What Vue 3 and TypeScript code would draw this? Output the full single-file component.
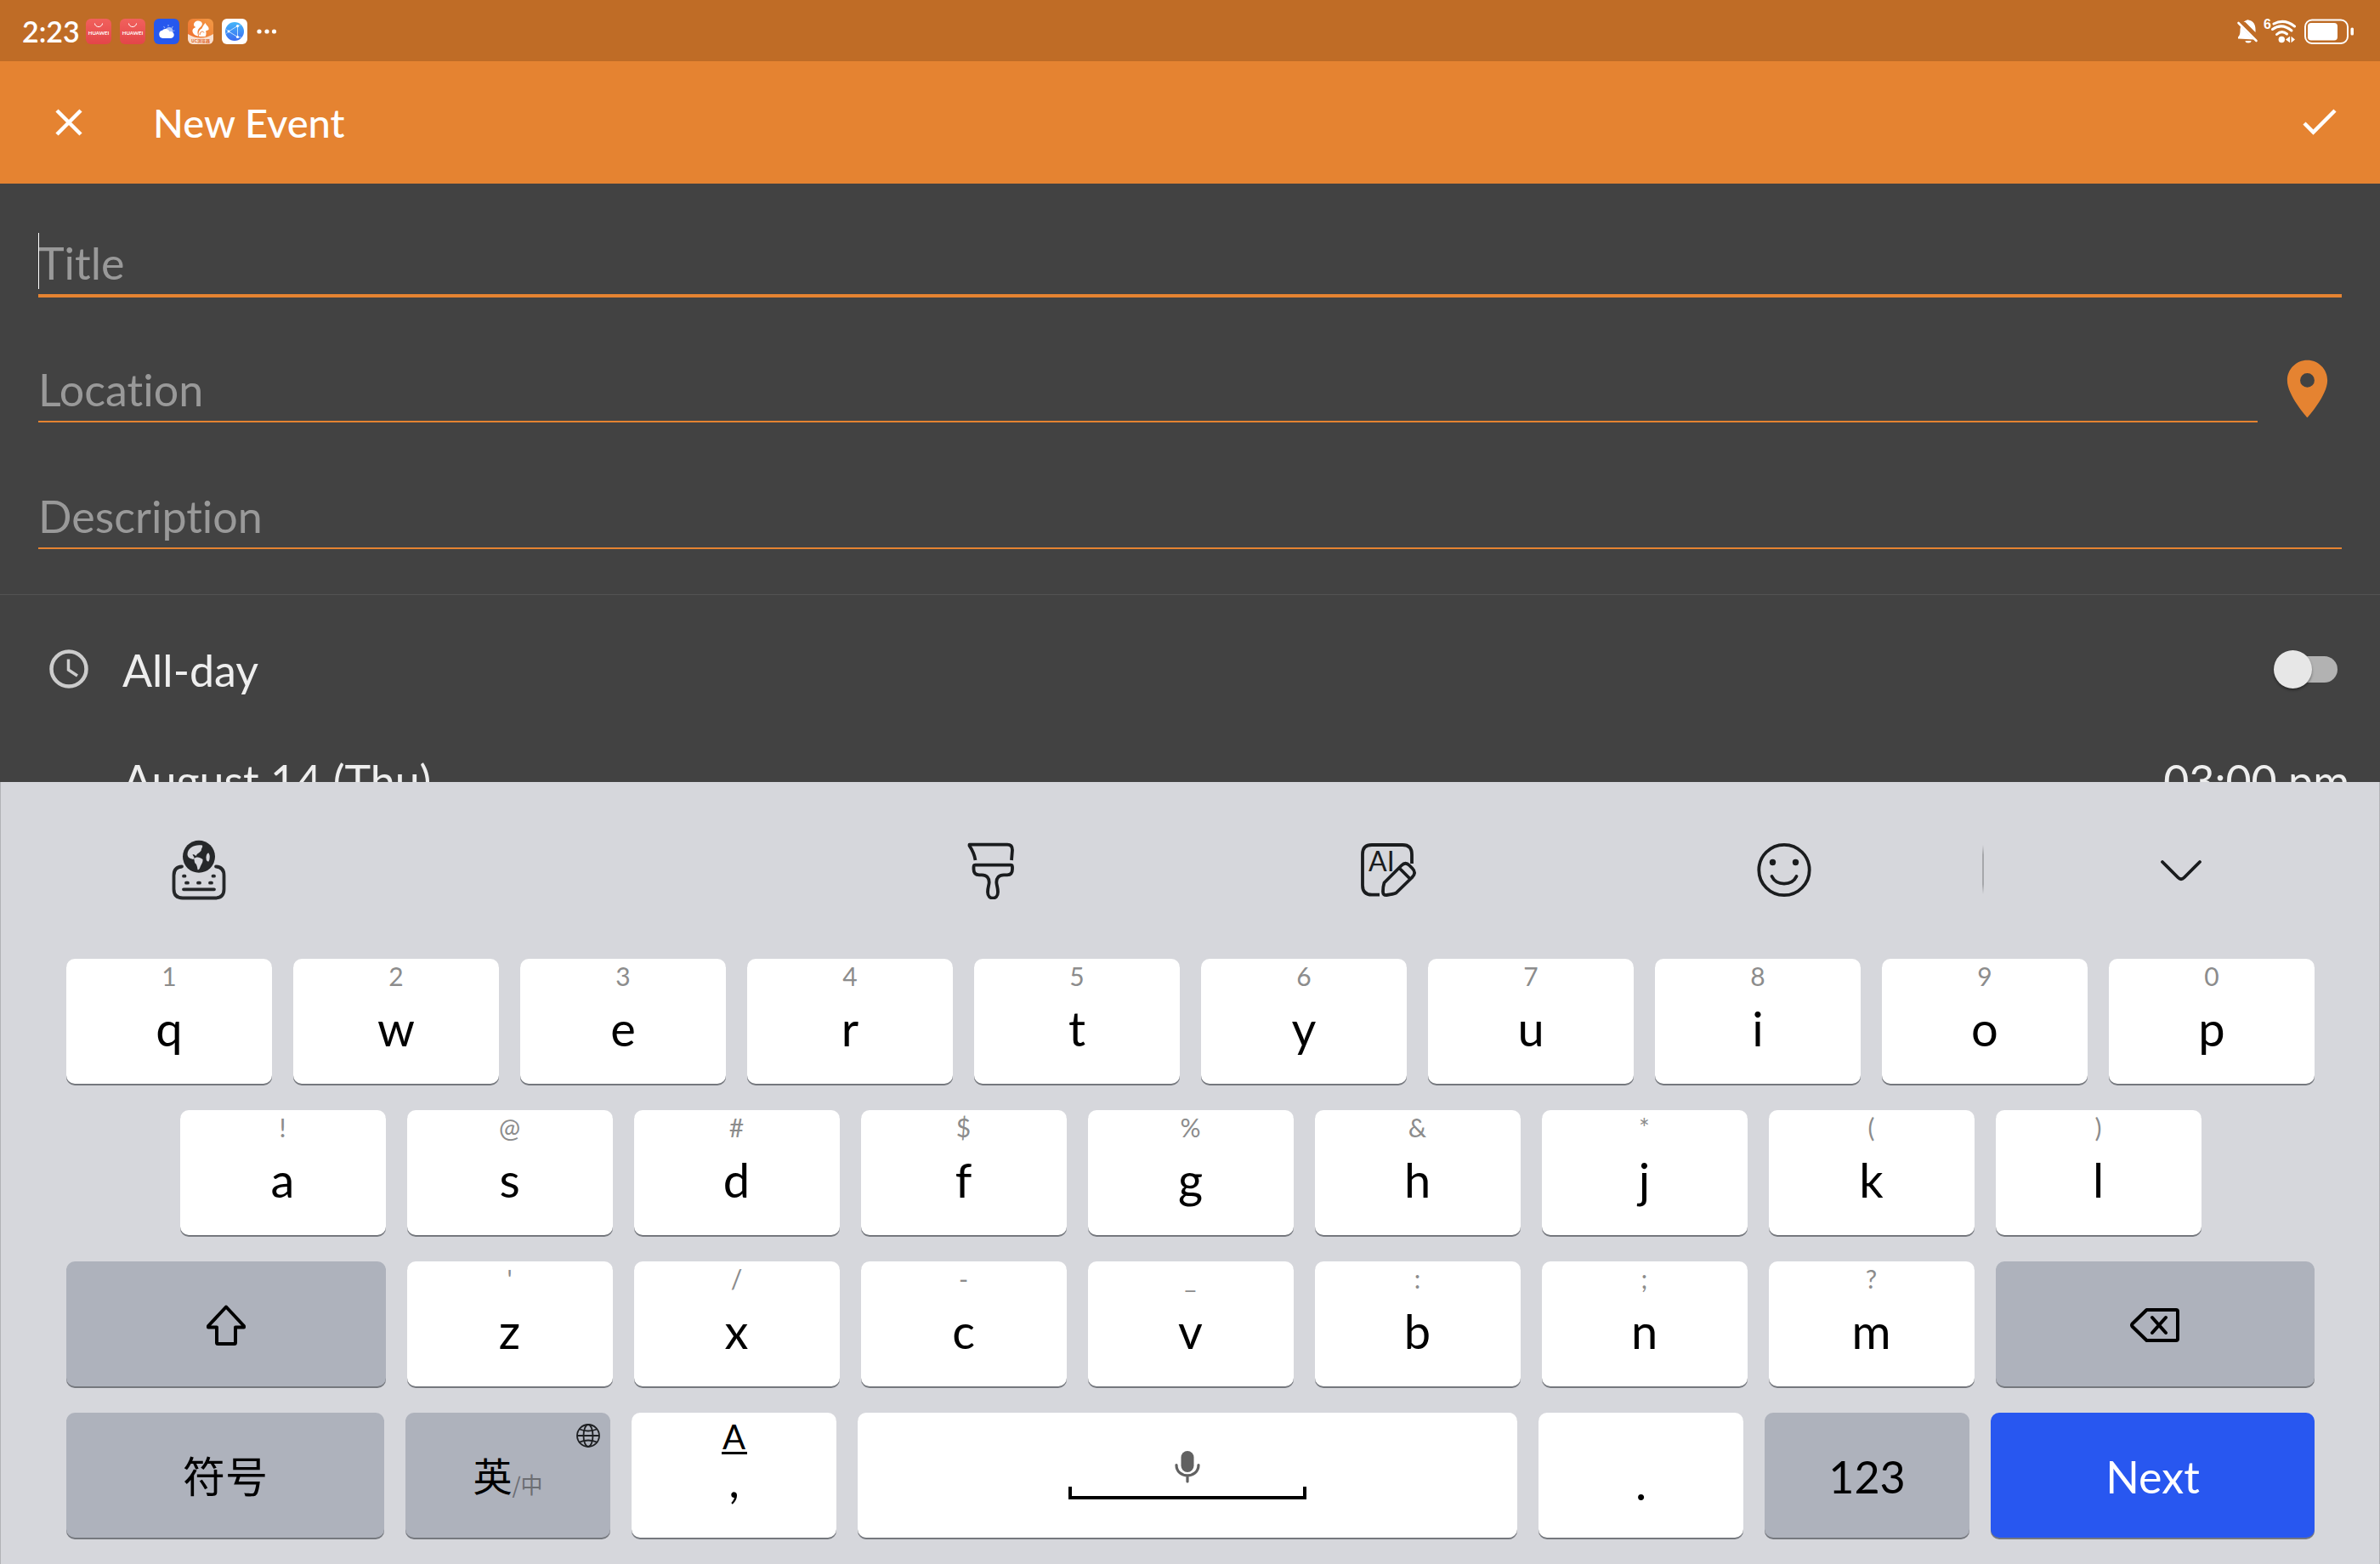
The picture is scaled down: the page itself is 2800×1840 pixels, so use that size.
<script setup lang="ts">
import { ref } from 'vue'

interface Key {
  hint: string
  label: string
}

const toKeys = (letters: string, hints: string): Key[] =>
  [...letters].map((label, i) => ({ label, hint: hints[i] }))

const topRow = toKeys('qwertyuiop', '1234567890')
const homeRow = toKeys('asdfghjkl', '!@#$%&*()')
const bottomRow = toKeys('zxcvbnm', "'/-_:;?")

const title = ref('')
const location = ref('')
const description = ref('')
const allDay = ref(false)
</script>

<template>
  <div class="screen">
    <header class="status">
      <div class="status-left">
        <span class="time">2:23</span>
        <div class="apps">
          <svg v-for="n in 2" :key="n" class="app" viewBox="0 0 30 30">
            <defs>
              <linearGradient :id="'mall' + n" x1="0" y1="0" x2="0" y2="1">
                <stop offset="0" stop-color="#f1615c" />
                <stop offset="1" stop-color="#e34549" />
              </linearGradient>
            </defs>
            <rect width="30" height="30" rx="6" :fill="`url(#mall${n})`" />
            <path d="M10.500 5.500a4.500 4 0 0 0 9 0" fill="none" stroke="#fff" stroke-width="1" />
            <text x="15" y="19" text-anchor="middle" class="brand">HUAWEI</text>
          </svg>
          <svg class="app" viewBox="0 0 30 30">
            <rect width="30" height="30" rx="6" fill="#2658ee" />
            <g stroke="#8fabf7" stroke-width="1.200">
              <path d="M17 7v2M11.500 9l1.500 2M22.500 9L21 11M24.500 14l-2 .5" />
            </g>
            <circle cx="18" cy="14.500" r="4.500" fill="#a9bff9" />
            <path d="M10.500 23a4.700 4.700 0 0 1-.4-9.300A5 5 0 0 1 18.500 15.200a4 4 0 1 1 1.500 7.800z" fill="#fff" />
          </svg>
          <svg class="app" viewBox="0 0 30 30">
            <defs>
              <linearGradient id="squirrel" x1="1" y1="0" x2="0" y2="1">
                <stop offset="0" stop-color="#f39a45" />
                <stop offset="1" stop-color="#ee6a2b" />
              </linearGradient>
              <clipPath id="squirrel-clip"><rect width="30" height="30" rx="6" /></clipPath>
            </defs>
            <g clip-path="url(#squirrel-clip)">
              <rect width="30" height="30" fill="url(#squirrel)" />
              <path d="M0 18Q15 27 30 18V30H0z" fill="#f9e0cf" />
              <path
                d="M7 7C7 3 12 1 15.500 3.500C18.500 6 16 9 13.500 11C11 13.500 11 17 12.500 20.500C8 20 5 17 5.500 13.500C5.700 11.500 8 10.500 9.500 10C8 9.500 7 8.500 7 7Z"
                fill="#fff"
              />
              <path
                d="M20.500 5L22 7.500C24 9 25 11 24.500 13L21 14.500C22 17 21.500 19.500 20.500 21H13.500C11.500 18 13 13 16.500 11.500C17.500 9 19 7 20.500 5Z"
                fill="#fff"
              />
              <path d="M14 19c0-4 4-5 5-2.500" fill="none" stroke="#ef7a34" stroke-width="1" />
              <text x="15" y="28" text-anchor="middle" class="brand-cjk">UC浏览器</text>
            </g>
          </svg>
          <svg class="app" viewBox="0 0 30 30">
            <defs>
              <linearGradient id="browser" x1="0" y1="0" x2="0" y2="1">
                <stop offset="0" stop-color="#43b5f8" />
                <stop offset="1" stop-color="#3c6cf2" />
              </linearGradient>
            </defs>
            <rect width="30" height="30" rx="6" fill="#fff" />
            <circle cx="15" cy="15" r="11" fill="url(#browser)" />
            <path d="M8 15L18.500 8.500V21.500Z" fill="none" stroke="#bfe0ff" stroke-width="1" />
            <path d="M4.500 12L8 15L4.500 18M18.500 8.500L22 7.500M18.500 21.500L23 22" fill="none" stroke="#bfe0ff" stroke-width=".7" />
            <g fill="#fff">
              <circle cx="8" cy="15" r="1.400" />
              <circle cx="18.500" cy="8.500" r="1.600" />
              <circle cx="18.500" cy="21.500" r="1.600" />
            </g>
          </svg>
          <svg class="more" viewBox="0 0 26 30">
            <g fill="#fff">
              <circle cx="4" cy="15" r="2.600" />
              <circle cx="13" cy="15" r="2.600" />
              <circle cx="21.500" cy="15" r="2.600" />
            </g>
          </svg>
        </div>
      </div>
      <svg class="indicators" viewBox="0 0 140 32">
        <g fill="#fff">
          <path d="M3 24V22.500C5.500 20.500 5.500 17 5.500 13.500L6 10L21.500 25.500L3 24.500Z" />
          <path d="M9.500 5C11 3.700 12 3.400 13 2.800Q14.500 1.500 16 2.800C21.500 4 24 8.500 23.500 17L11.500 5Z" />
          <path d="M11.500 27h7a3.500 2.500 0 0 1-7 0z" />
        </g>
        <path d="M3.500 6L24.500 27" stroke="#fff" stroke-width="2.600" stroke-linecap="round" />
        <text x="33" y="13" class="wifi-gen">6</text>
        <g fill="none" stroke="#fff" stroke-width="3" stroke-linecap="round">
          <path d="M45 7Q57.500 .5 69.500 10" />
          <path d="M43.500 13.500Q54.500 5.500 66 15" />
          <path d="M48.500 19.500Q54.500 14 60.500 19" />
        </g>
        <circle cx="54.300" cy="25.500" r="3.700" fill="#fff" />
        <path d="M59 25.500l5-3.800v7.600zM70 25.500l-4.500-3.800v7.600z" fill="#fff" />
        <rect x="82" y="2.500" width="50" height="27.500" rx="8" fill="none" stroke="#fff" stroke-width="2" />
        <rect x="85" y="6" width="35" height="20.500" rx="4" fill="#fff" />
        <rect x="135.500" y="11.500" width="3.500" height="9" rx="1.500" fill="#fff" />
      </svg>
    </header>

    <div class="appbar">
      <button type="button" class="bar-btn" aria-label="Close">
        <svg width="34" height="34" viewBox="0 0 34 34">
          <path d="M3 3L31 31M31 3L3 31" stroke="#fff" stroke-width="4.500" />
        </svg>
      </button>
      <h1>New Event</h1>
      <button type="button" class="bar-btn" aria-label="Save">
        <svg width="42" height="34" viewBox="0 0 42 34">
          <path d="M3 18L13.500 28.500L39 3" fill="none" stroke="#fff" stroke-width="4.500" />
        </svg>
      </button>
    </div>

    <main class="form">
      <section class="fields">
        <div class="field focused">
          <input v-model="title" type="text" placeholder="Title" aria-label="Title" />
        </div>
        <div class="field">
          <input v-model="location" type="text" placeholder="Location" aria-label="Location" />
          <button type="button" class="pin" aria-label="Pick on map">
            <svg width="81" height="81" viewBox="0 0 24 24">
              <path
                d="M12 2C8.130 2 5 5.130 5 9c0 5.250 7 13 7 13s7-7.750 7-13c0-3.870-3.130-7-7-7zm0 9.500a2.500 2.500 0 1 1 0-5 2.500 2.500 0 0 1 0 5z"
                fill="#e58331"
              />
            </svg>
          </button>
        </div>
        <div class="field">
          <input v-model="description" type="text" placeholder="Description" aria-label="Description" />
        </div>
      </section>

      <label class="allday">
        <svg width="46" height="46" viewBox="0 0 46 46" fill="none" stroke="#ccc">
          <circle cx="23" cy="23" r="20.500" stroke-width="4.500" />
          <path d="M22.500 11.500V24L33 31" stroke-width="3.500" />
        </svg>
        <span>All-day</span>
        <input v-model="allDay" type="checkbox" role="switch" />
      </label>
      <div class="when">
        <button type="button">August 14 (Thu)</button>
        <button type="button">03:00 pm</button>
      </div>
    </main>

    <section class="keyboard" aria-label="Keyboard">
      <div class="tools">
        <button type="button" aria-label="Switch keyboard">
          <svg width="66" height="72" viewBox="0 0 66 72" fill="none" stroke="#26282a" stroke-width="3.800" stroke-linecap="round">
            <path d="M13 31.500Q3.500 32 3.500 42V58Q3.500 68.500 14 68.500H52Q62.500 68.500 62.500 58V42Q62.500 32 53 31.500" />
            <path d="M15 42.700h1.500M49.500 42.700H51M18 50.700h2M32 50.700h2M46 50.700h2M15 58.300H51" />
            <circle cx="33" cy="19.700" r="19" fill="#26282a" stroke="none" />
            <g fill="#d6d7dc" stroke="none">
              <path d="M37 6.500C29 5 20 8.500 19.500 17C19.500 21 23 22 26 23C29 21.500 27 20 25.500 17.500C28 16 29 20 30 18.500C30.500 16 34 15.500 36 12C35 11 38 9 37 6.500Z" />
              <path d="M27 22C30 19.500 34 20 37.500 23C38 27 35.500 29 34.500 32C34 34 32.500 36 31.500 35C31 31.500 30.500 29 28.500 27.500C27.500 26 28 24 27 22Z" />
              <path d="M44.500 15.500Q47 20 44.500 25.500Q41.500 26 41.500 20.500Q42 15.500 44.500 15.500Z" />
            </g>
          </svg>
        </button>
        <span></span>
        <button type="button" aria-label="Themes">
          <svg width="64" height="68" viewBox="0 0 64 68" fill="none" stroke="#1a1c1e" stroke-width="3.800" stroke-linejoin="round">
            <path d="M12.500 22Q11 13 5.500 5V3.700H50Q56 3.700 56 10L55 22" />
            <path
              d="M12.500 27.700H54Q56 27.700 56 29.700V32.500Q56 39.300 50 39.300H46C40 39.300 37.300 43 37.300 48C37.500 52 39 54 39 59.500C39 69 27 69 27 59.500C27 54 28.500 52 28.700 48C28.700 43 26 39.300 20 39.300H17Q10.500 39.300 10.500 32.500V29.700Q10.500 27.700 12.500 27.700Z"
            />
          </svg>
        </button>
        <button type="button" aria-label="AI writing">
          <svg width="68" height="68" viewBox="0 0 68 68" fill="none" stroke="#1a1c1e" stroke-width="3.800" stroke-linejoin="round">
            <path d="M62 26V15.500Q62 4 51 4H15Q4 4 4 15V51.500Q4 62.700 15 62.700H24" />
            <path
              d="M29.500 48.500L50 28Q54.500 23.500 59 28L62.500 31.500Q68 37 62 42.500L43.500 60.500Q40 62 32.500 63Q28 63.500 28 59Q28 53 29.500 48.500ZM47.500 31.500L59.500 43.500"
            />
            <text x="11" y="35" class="ai">AI</text>
          </svg>
        </button>
        <button type="button" aria-label="Emoji">
          <svg width="66" height="68" viewBox="0 0 66 68">
            <circle cx="33" cy="33.500" r="29.700" fill="none" stroke="#1a1c1e" stroke-width="3.800" />
            <circle cx="19.500" cy="24.500" r="3.700" fill="#1a1c1e" />
            <circle cx="46.500" cy="24.500" r="3.700" fill="#1a1c1e" />
            <path d="M18.500 41C24 52.500 42 52.500 47.500 41" fill="none" stroke="#1a1c1e" stroke-width="3.800" stroke-linecap="round" />
          </svg>
        </button>
        <button type="button" class="collapse" aria-label="Hide keyboard">
          <svg width="50" height="26" viewBox="0 0 50 26">
            <path d="M3 3L21.500 21.500Q25 25 28.500 21.500L47 3" fill="none" stroke="#1a1c1e" stroke-width="3.800" stroke-linecap="round" />
          </svg>
        </button>
      </div>

      <div class="rows">
        <div class="row">
          <button v-for="k in topRow" :key="k.label" type="button" class="key">
            <small>{{ k.hint }}</small><span>{{ k.label }}</span>
          </button>
        </div>
        <div class="row home">
          <button v-for="k in homeRow" :key="k.label" type="button" class="key">
            <small>{{ k.hint }}</small><span>{{ k.label }}</span>
          </button>
        </div>
        <div class="row">
          <button type="button" class="key gray wide" aria-label="Shift">
            <svg width="50" height="50" viewBox="0 0 50 50">
              <path
                d="M25 3.500L46 26V27.500H36V45.500Q36 47 34.500 47H15.500Q14 47 14 45.500V27.500H4V26Z"
                fill="none" stroke="#000" stroke-width="4" stroke-linejoin="round"
              />
            </svg>
          </button>
          <button v-for="k in bottomRow" :key="k.label" type="button" class="key">
            <small>{{ k.hint }}</small><span>{{ k.label }}</span>
          </button>
          <button type="button" class="key gray wide" aria-label="Backspace">
            <svg width="60" height="42" viewBox="0 0 60 42" fill="none" stroke="#000" stroke-width="4" stroke-linejoin="round" stroke-linecap="round">
              <path d="M20.500 3H55Q57 3 57 5V37Q57 39 55 39H20.500L3.500 22.500Q2.500 21 3.500 19.500Z" />
              <path d="M27 12L43 30M43 12L27 30" />
            </svg>
          </button>
        </div>
        <div class="row last">
          <button type="button" class="key gray symbols">符号</button>
          <button type="button" class="key gray lang">
            <b>英</b><i>/中</i>
            <svg class="globe" width="28" height="28" viewBox="0 0 28 28" fill="none" stroke="#1d1f22" stroke-width="1.800">
              <circle cx="14" cy="14" r="13" />
              <ellipse cx="14" cy="14" rx="5.500" ry="13" />
              <path d="M1 14H27M4 6.500Q14 10.500 24 6.500M4 21.500Q14 17.500 24 21.500" />
            </svg>
          </button>
          <button type="button" class="key comma"><u>A</u><span>,</span></button>
          <button type="button" class="key space" aria-label="Space">
            <svg width="280" height="60" viewBox="0 0 280 60">
              <rect x="132.500" y="1" width="15" height="25" rx="7.500" fill="#616161" />
              <path d="M127 17.500C127 34 153 34 153 17.500M140 30V37" fill="none" stroke="#616161" stroke-width="3.200" stroke-linecap="round" />
              <path d="M2 43V56H278V43" fill="none" stroke="#000" stroke-width="4" />
            </svg>
          </button>
          <button type="button" class="key dot"><small></small><span>.</span></button>
          <button type="button" class="key gray text">123</button>
          <button type="button" class="key text next">Next</button>
        </div>
      </div>
    </section>
  </div>
</template>

<style>
body {
  margin: 0;
  background: #424242;
}
</style>

<style scoped>
.screen {
  display: flex;
  flex-direction: column;
  height: 100vh;
  overflow: hidden;
  background: #424242;
  color: #eee;
  font-family: Lato, 'Noto Sans CJK SC', sans-serif;
  font-size: 52px;
  font-variant-ligatures: none;
}

button,
input {
  margin: 0;
  padding: 0;
  border: 0;
  background: none;
  color: inherit;
  font: inherit;
  font-variant-ligatures: none;
}

svg {
  display: block;
}

/* Status bar */
.status {
  flex: none;
  display: flex;
  align-items: center;
  justify-content: space-between;
  height: 72px;
  box-sizing: border-box;
  padding: 2px 30px 0 26px;
  background: #bf6c26;
}

.status-left {
  display: flex;
  align-items: center;
  gap: 7px;
}

.apps {
  display: flex;
  align-items: center;
  gap: 10px;
}

.time {
  color: #fff;
  font-size: 34px;
  font-weight: 600;
  line-height: 40px;
}

.app {
  width: 30px;
  height: 30px;
}

.more {
  width: 26px;
  height: 30px;
}

.brand {
  fill: #fff;
  font: 700 6px Lato, sans-serif;
}

.brand-cjk {
  fill: #e0662a;
  font: 700 5px 'Noto Sans CJK SC', sans-serif;
}

.wifi-gen {
  fill: #fff;
  font: 700 16px 'Liberation Sans', sans-serif;
}

.indicators {
  width: 140px;
  height: 32px;
}

/* App bar */
.appbar {
  flex: none;
  display: flex;
  align-items: center;
  height: 144px;
  padding: 0 50px 0 64px;
  background: #e58331;
}

.bar-btn {
  display: grid;
  place-items: center;
  height: 44px;
}

h1 {
  flex: 1;
  margin: 0 0 0 82px;
  color: #fff;
  font-size: 47px;
  font-weight: 500;
}

/* Event form */
.form {
  flex: 1;
  min-height: 0;
  overflow: hidden;
}

.fields {
  display: flex;
  flex-direction: column;
  gap: 67px;
  padding: 52px 45px 51px;
  border-bottom: 1px solid #525252;
}

.field {
  position: relative;
  display: flex;
  align-items: flex-start;
  gap: 18px;
  height: 82px;
}

.field input {
  flex: 1;
  min-width: 0;
  box-sizing: content-box;
  height: 75px;
  padding-top: 3px;
  border-bottom: 2px solid #e58331;
  border-radius: 0;
  outline: none;
}

.field input::placeholder {
  color: #999;
  opacity: 1;
}

.field.focused input {
  border-bottom-width: 4px;
}

.field.focused::before {
  content: '';
  position: absolute;
  left: 0;
  top: 6px;
  width: 1px;
  height: 66px;
  background: #fff;
}

.allday {
  display: flex;
  align-items: center;
  height: 174px;
  padding: 0 50px 0 58px;
}

.allday span {
  flex: 1;
  margin-left: 40px;
  padding-top: 2px;
}

.allday input {
  appearance: none;
  position: relative;
  width: 70px;
  height: 31px;
  border-radius: 16px;
  background: #b2b2b2;
}

.allday input::before {
  content: '';
  position: absolute;
  left: -5px;
  top: -7px;
  width: 45px;
  height: 45px;
  border-radius: 50%;
  background: #e7e7e7;
  box-shadow: 0 2px 3px rgba(0, 0, 0, 0.4);
}

.allday input:checked::before {
  left: 30px;
}

.when {
  display: flex;
  justify-content: space-between;
  align-items: center;
  height: 88px;
  padding: 0 36px 0 144px;
}

/* On-screen keyboard */
.keyboard {
  flex: none;
  box-sizing: border-box;
  border: solid #b2b3b7;
  border-width: 0 1px;
  background: #d6d7dc;
  color: #000;
}

.tools {
  display: grid;
  grid-template-columns: repeat(6, 1fr);
  height: 208px;
}

.tools button {
  display: grid;
  place-items: center;
}

.collapse {
  position: relative;
}

.collapse::before {
  content: '';
  position: absolute;
  left: -1px;
  top: 74px;
  width: 2px;
  height: 58px;
  background: linear-gradient(transparent, #a6a7ab 20%, #a6a7ab 80%, transparent);
}

.ai {
  fill: #1a1c1e;
  stroke: none;
  font: 400 32px Lato, sans-serif;
}

.rows {
  display: flex;
  flex-direction: column;
  gap: 31px;
  padding: 0 76px 31px 77px;
}

.row {
  display: grid;
  grid-template-columns: repeat(20, 1fr);
  gap: 25px;
}

.home .key:first-child {
  grid-column: 2 / span 2;
}

.last {
  grid-template-columns: 374fr 241fr 241fr 776fr 241fr 241fr 381fr;
}

.key {
  grid-column: span 2;
  display: flex;
  flex-direction: column;
  align-items: center;
  min-width: 0;
  height: 147px;
  border-radius: 10px;
  background: #fff;
  box-shadow: 0 2px 0 #75787e;
}

.key.wide {
  grid-column: span 3;
}

.last .key {
  grid-column: auto;
}

.key small {
  height: 40px;
  color: #8c8c8c;
  font-size: 30px;
  line-height: 40px;
}

.key span {
  font-size: 56px;
  line-height: 84px;
}

.key.gray {
  justify-content: center;
  background: #aeb2bc;
}

.key.wide {
  box-sizing: border-box;
  padding-top: 2px;
}

.key.symbols {
  box-sizing: border-box;
  padding-bottom: 3px;
  font-size: 50px;
  font-family: 'Noto Sans CJK SC', sans-serif;
}

.key.lang {
  position: relative;
  flex-direction: row;
  align-items: center;
  box-sizing: border-box;
  padding-bottom: 3px;
  font-family: 'Noto Sans CJK SC', sans-serif;
}

.lang b {
  font-size: 46px;
  font-weight: 400;
}

.lang i {
  align-self: flex-end;
  color: #6c6e73;
  font-size: 26px;
  font-style: normal;
  line-height: 38px;
  margin-bottom: 41px;
}

.globe {
  position: absolute;
  top: 13px;
  right: 12px;
}

.comma u {
  width: 30px;
  height: 36px;
  margin-top: 10px;
  border-bottom: 3px solid #000;
  font-size: 40px;
  line-height: 36px;
  text-align: center;
  text-decoration: none;
}

.key.comma span {
  line-height: 60px;
}

.key.space {
  align-items: center;
  justify-content: flex-end;
  padding-bottom: 43px;
  box-sizing: border-box;
}

.key.text {
  justify-content: center;
  box-sizing: border-box;
  padding-top: 2px;
  font-size: 52px;
}

.key.next {
  background: #2857f0;
  color: #fff;
}
</style>
